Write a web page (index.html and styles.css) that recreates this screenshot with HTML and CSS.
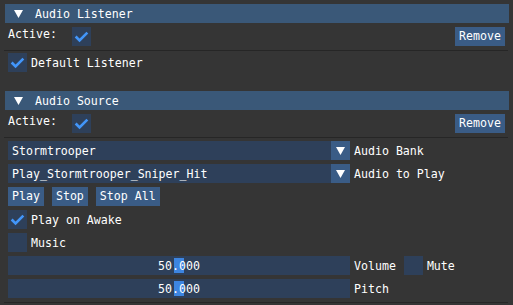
FILE: index.html
```html
<!DOCTYPE html>
<html lang="en">
<head>
  <meta charset="UTF-8" />
  <title>Inspector</title>
  <link rel="stylesheet" href="styles.css">
</head>
<body>

  <div class="panel">

    <!-- Audio Listener -->
    <div class="header">
      <svg class="arrow" width="9" height="8" viewBox="0 0 9 8"><polygon points="0,0 9,0 4.5,8" /></svg>
      <span class="text">Audio Listener</span>
    </div>

    <div class="row">
      <span class="label-fixed">Active:</span>
      <span class="check on"><svg width="19" height="19" viewBox="0 0 19 19"><polyline points="3.65,9.5 7.55,13.4 15.35,5.6" /></svg></span>
      <span class="spacer"></span>
      <button class="btn">Remove</button>
    </div>

    <div class="separator"></div>

    <div class="row after-sep">
      <span class="check on"><svg width="19" height="19" viewBox="0 0 19 19"><polyline points="3.65,9.5 7.55,13.4 15.35,5.6" /></svg></span>
      <span class="label">Default Listener</span>
    </div>

    <!-- Audio Source -->
    <div class="header second">
      <svg class="arrow" width="9" height="8" viewBox="0 0 9 8"><polygon points="0,0 9,0 4.5,8" /></svg>
      <span class="text">Audio Source</span>
    </div>

    <div class="row">
      <span class="label-fixed">Active:</span>
      <span class="check on"><svg width="19" height="19" viewBox="0 0 19 19"><polyline points="3.65,9.5 7.55,13.4 15.35,5.6" /></svg></span>
      <span class="spacer"></span>
      <button class="btn">Remove</button>
    </div>

    <div class="separator"></div>

    <div class="row after-sep wide">
      <div class="combo">
        <span class="text">Stormtrooper</span>
        <span class="combo-arrow"><svg width="9" height="8" viewBox="0 0 9 8"><polygon points="0,0 9,0 4.5,8" /></svg></span>
      </div>
      <span class="label">Audio Bank</span>
    </div>

    <div class="row">
      <div class="combo">
        <span class="text">Play_Stormtrooper_Sniper_Hit</span>
        <span class="combo-arrow"><svg width="9" height="8" viewBox="0 0 9 8"><polygon points="0,0 9,0 4.5,8" /></svg></span>
      </div>
      <span class="label">Audio to Play</span>
    </div>

    <div class="row buttons">
      <button class="btn">Play</button>
      <button class="btn">Stop</button>
      <button class="btn">Stop All</button>
    </div>

    <div class="row">
      <span class="check on"><svg width="19" height="19" viewBox="0 0 19 19"><polyline points="3.65,9.5 7.55,13.4 15.35,5.6" /></svg></span>
      <span class="label">Play on Awake</span>
    </div>

    <div class="row">
      <span class="check"></span>
      <span class="label">Music</span>
    </div>

    <div class="row">
      <div class="slider">
        <span class="grab"></span>
        <span class="text">50.000</span>
      </div>
      <span class="label">Volume</span>
      <span class="check mute"></span>
      <span class="label">Mute</span>
    </div>

    <div class="row">
      <div class="slider">
        <span class="grab"></span>
        <span class="text">50.000</span>
      </div>
      <span class="label">Pitch</span>
    </div>

    <div class="separator"></div>

  </div>

</body>
</html>
```

FILE: styles.css
```css
:root {
  --bg: #353535;
  --frame: #2e405a;
  --header: #3a5878;
  --button: #3a5c86;
  --check: #4296fa;
  --grab: #3d85e0;
  --line: #262626;
  --text: #ffffff;
  --font: "DejaVu Sans Mono", "Liberation Mono", monospace;
}

body {
  margin: 0;
  background: var(--bg);
  color: var(--text);
  font-family: var(--font);
  font-size: 11.6px;
  line-height: 13px;
}

.panel {
  padding-top: 4px;
}

/* text sitting inside a 19px frame, a hair below center like ImGui */
.text,
.label {
  padding-top: 1px;
  white-space: nowrap;
}

.header {
  display: flex;
  align-items: center;
  gap: 12px;
  height: 19px;
  margin: 0 4px 0 5px;
  padding-left: 9px;
  background: var(--header);
}

.header.second {
  margin-top: 19px;
}

.arrow,
.combo-arrow svg {
  fill: var(--text);
  display: block;
}

.row {
  display: flex;
  align-items: center;
  height: 19px;
  margin-top: 4px;
  padding: 0 8px;
}

.row.after-sep {
  margin-top: 2px;
}

.row.after-sep.wide {
  margin-top: 3px;
}

/* plain text, not frame-aligned, so it sits higher */
.label-fixed {
  align-self: flex-start;
  width: 64px;
  padding-top: 1px;
}

.label {
  margin-left: 4px;
}

.spacer {
  flex: 1;
}

.check {
  width: 19px;
  height: 19px;
  flex: none;
  background: var(--frame);
}

.check svg {
  display: block;
  fill: none;
  stroke: var(--check);
  stroke-width: 2.6;
}

.check.mute {
  margin-left: 8px;
}

.btn {
  height: 19px;
  padding: 0 4px;
  border: none;
  background: var(--button);
  color: var(--text);
  font: inherit;
  line-height: 19px;
}

.buttons {
  gap: 8px;
}

.separator {
  height: 1px;
  margin: 4px 5px 0 4px;
  background: var(--line);
}

.combo {
  display: flex;
  align-items: center;
  width: 342px;
  height: 19px;
  background: var(--frame);
}

.combo .text {
  flex: 1;
  padding-left: 4px;
}

.combo-arrow {
  display: flex;
  align-items: center;
  justify-content: center;
  align-self: stretch;
  width: 19px;
  background: var(--button);
}

.slider {
  position: relative;
  display: flex;
  align-items: center;
  justify-content: center;
  width: 342px;
  height: 19px;
  background: var(--frame);
}

.grab {
  position: absolute;
  left: 166px;
  top: 2px;
  width: 10px;
  height: 15px;
  background: var(--grab);
}

.slider .text {
  position: relative;
}
```
